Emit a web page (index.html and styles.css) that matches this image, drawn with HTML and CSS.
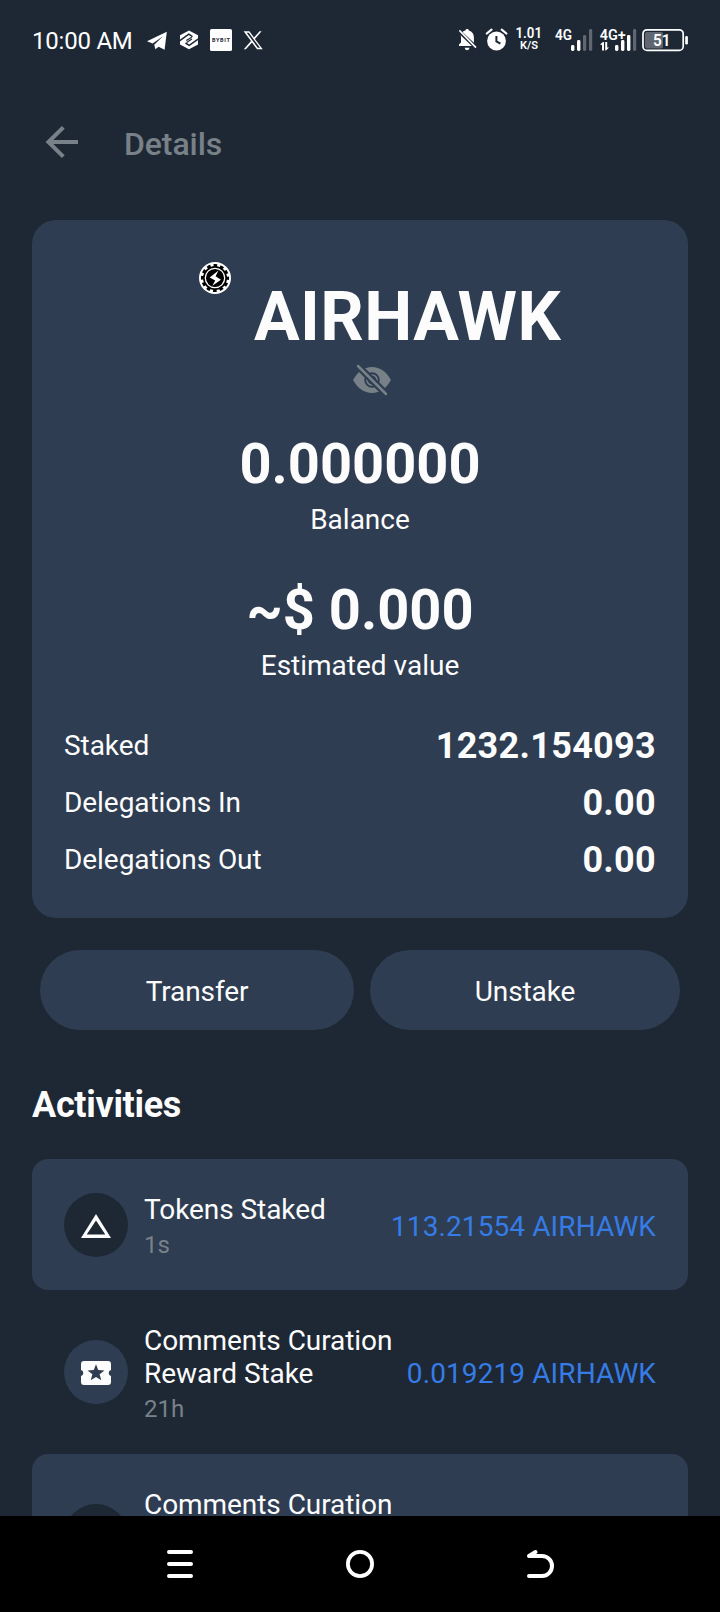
FILE: index.html
```html
<!DOCTYPE html>
<html lang="en">
<head>
<meta charset="utf-8">
<title>Details</title>
<link rel="stylesheet" href="styles.css">
</head>
<body>
<div class="screen">
  <div class="status">
    <span class="clock">10:00 AM</span>
    <svg class="status-apps" width="120" height="24" viewBox="145 28 120 24">
      <path fill="#fff" d="M147 41.2 166.8 31.8 164.6 49.8 158.6 46.8 155.4 49.2 154.2 44.8 163 36.2 152.6 43.6Z"/>
      <path fill="#fff" d="M189 30.400 198 35.200V44.400L189 49.200 180 44.400V35.200Z"/>
      <g fill="none" stroke="#1e2835" stroke-width="1.500">
        <path d="M179.500 40.800 188.800 34.200 192.500 36.600M198.500 38.800 189.200 45.400 185.500 43"/>
        <path d="M186.300 40.600 191.700 37.200M186.600 42.400 192 39" stroke-width="1.200"/>
      </g>
      <rect x="210" y="29" width="22" height="22" rx="1.6" fill="#fff"/>
      <text class="bybit" x="211.9" y="42" textLength="18">BYBIT</text>
      <path fill="#fff" fill-rule="evenodd" d="M243.6 31.2h5.8l4.6 6.4 5.6-6.4h2l-6.7 7.7 7.8 10.4H257l-5-6.9-6.1 6.9h-2.1l7.2-8.2ZM246.7 32.7 257.8 47.8h2.2L248.8 32.7Z"/>
    </svg>
    <svg class="status-system" width="232" height="24" viewBox="457 28 232 24">
      <g fill="#fff">
        <path d="M467.2 29c1 0 1.6.7 1.7 1.6 3.2.8 5 3.4 5 6.8v5.4L462.5 32c.8-.7 1.8-1.2 2.9-1.4.1-.9.8-1.6 1.8-1.6ZM460.6 35.3 471.8 46H459v-1.5l2-2V37ZM464.7 47.8h4.8a2.4 2.4 0 0 1-4.8 0Z"/>
        <path d="M459.4 30.4 476 47.6" stroke="#fff" stroke-width="1.6"/>
        <circle cx="496.5" cy="41" r="9.4"/>
        <path d="m486.8 33.5 4.7-3.8M506.4 33.5l-4.7-3.8" stroke="#fff" stroke-width="2.2" stroke-linecap="round"/>
        <path d="M496.4 36v5.4l4 2.3" fill="none" stroke="#1e2835" stroke-width="2"/>
        <rect x="571" y="45" width="3.4" height="6" rx="1.4"/><rect x="577" y="40" width="3.4" height="11" rx="1.4"/>
        <rect x="615" y="45" width="3.4" height="6" rx="1.4"/><rect x="621" y="40" width="3.4" height="11" rx="1.4"/><rect x="627" y="35" width="3.4" height="16" rx="1.4"/>
        <path d="m600 44.400 3-2.400h1v8.600h-2v-5.600ZM605.200 42h2v5.600h1.800l-3 3h-.8Z"/>
        <rect x="685.200" y="36" width="2.700" height="8.500" rx="1.200"/>
      </g>
      <g fill="#606771"><rect x="583" y="35" width="3.200" height="16" rx="1.400"/><rect x="589" y="29" width="3.200" height="22" rx="1.400"/><rect x="633" y="29" width="3.200" height="22" rx="1.400"/><rect x="645" y="32" width="18" height="16.500" rx="2"/></g>
      <rect x="643" y="29.800" width="40.200" height="20.600" rx="4" fill="none" stroke="#fff" stroke-width="1.700"/>
      <text class="tiny" x="515.500" y="38" font-size="15" textLength="26.500" lengthAdjust="spacingAndGlyphs">1.01</text>
      <text class="tiny" x="520" y="49" font-size="10.500" textLength="18" lengthAdjust="spacingAndGlyphs">K/S</text>
      <text class="tiny" x="555" y="40" font-size="14" textLength="17" lengthAdjust="spacingAndGlyphs">4G</text>
      <text class="tiny" x="599.700" y="40" font-size="14" textLength="26" lengthAdjust="spacingAndGlyphs">4G+</text>
      <text class="tiny" x="653" y="45.600" font-size="16" textLength="17.500" lengthAdjust="spacingAndGlyphs">51</text>
    </svg>
  </div>

  <header class="header">
    <svg width="34" height="34" viewBox="0 0 34 34" fill="none" stroke="#788187" stroke-width="4"><path d="M33 17H4M18.300 2.300 3.400 17 18.300 31.700"/></svg>
    <h1 class="title">Details</h1>
  </header>

  <section class="card">
    <div class="token">
      <svg class="logo" width="32" height="32" viewBox="0 0 32 32">
        <circle cx="16" cy="16" r="16" fill="#fff"/>
        <circle cx="16" cy="16" r="12" fill="#000"/>
        <circle cx="16" cy="16" r="12.600" fill="none" stroke="#000" stroke-width="2.900" stroke-dasharray="3.600 2.997" stroke-dashoffset="1.800"/>
        <circle cx="16" cy="16" r="9.700" fill="none" stroke="#fff" stroke-width="1.300"/>
        <path fill="#fff" d="m19.500 8.500-8.800 7 5.500 3-2.800 5.300 8.500-6-5.300-3.500Z"/>
      </svg>
      <h2 class="name">AIRHAWK</h2>
    </div>
    <svg class="eye" width="38" height="32" viewBox="0 0 38 32">
      <defs><mask id="slash"><path fill="#fff" d="M0 0h38v32H0z"/><path d="M1-2 37 34" stroke="#000" stroke-width="7"/></mask></defs>
      <g mask="url(#slash)">
        <path fill="#788187" d="M0 16C4.500 8 11 3 19 3s14.500 5 19 13c-4.500 8-11 13-19 13S4.500 24 0 16Z"/>
        <circle cx="19" cy="16" r="6.800" fill="none" stroke="#2e3d51" stroke-width="1.900"/>
        <circle cx="19" cy="16" r="3.700" fill="none" stroke="#2e3d51" stroke-width="1.300"/>
      </g>
      <path d="M5 2 33 30" stroke="#788187" stroke-width="2.500" stroke-linecap="round"/>
    </svg>
    <div class="figure">0.000000</div>
    <div class="caption">Balance</div>
    <div class="figure estimate">~$ 0.000</div>
    <div class="caption">Estimated value</div>
    <dl class="stats">
      <div class="stat"><dt>Staked</dt><dd>1232.154093</dd></div>
      <div class="stat"><dt>Delegations In</dt><dd>0.00</dd></div>
      <div class="stat"><dt>Delegations Out</dt><dd>0.00</dd></div>
    </dl>
  </section>

  <div class="actions">
    <button class="pill transfer">Transfer</button>
    <button class="pill unstake">Unstake</button>
  </div>

  <h3 class="section-title">Activities</h3>
  <div class="list">
    <article class="item raised">
      <span class="badge"><svg width="30" height="24" viewBox="0 0 30 24"><path fill="#fcfcfc" fill-rule="evenodd" d="M15 0 30 24H0ZM15 6.600 5.700 20.600h18.600Z"/></svg></span>
      <div class="what"><div class="label">Tokens Staked</div><div class="time">1s</div></div>
      <div class="amount">113.21554 AIRHAWK</div>
    </article>
    <article class="item">
      <span class="badge"><svg width="30" height="24" viewBox="0 0 30 24"><path fill="#fcfcfc" fill-rule="evenodd" d="M3 0h24a3 3 0 0 1 3 3v6a3.100 3.100 0 0 0 0 6v6a3 3 0 0 1-3 3H3a3 3 0 0 1-3-3v-6a3.100 3.100 0 0 0 0-6V3a3 3 0 0 1 3-3ZM15 3.200l-2.200 5.900-6.300.300 4.900 3.900-1.700 6 5.300-3.400 5.300 3.400-1.700-6 4.900-3.900-6.300-.300Z"/></svg></span>
      <div class="what"><div class="label">Comments Curation Reward Stake</div><div class="time">21h</div></div>
      <div class="amount">0.019219 AIRHAWK</div>
    </article>
    <article class="item raised">
      <span class="badge"></span>
      <div class="what"><div class="label">Comments Curation</div></div>
    </article>
  </div>

  <nav class="nav">
    <svg width="28" height="28" viewBox="0 0 28 28" stroke="#fff" stroke-width="4" stroke-linecap="round"><path d="M3 2h22M3 14h22M3 26h22"/></svg>
    <svg width="28" height="28" viewBox="0 0 28 28" fill="none" stroke="#fff" stroke-width="3.800"><circle cx="14" cy="14" r="12.100"/></svg>
    <svg width="28" height="28" viewBox="0 0 28 28" fill="none" stroke="#fff" stroke-width="4" stroke-linecap="round" stroke-linejoin="round"><path d="M3 6h13a10 10 0 0 1 0 20H3M9.500 2 3 6"/></svg>
  </nav>
</div>
</body>
</html>
```
FILE: styles.css
```css
* { box-sizing: border-box; }
body {
  margin: 0;
  background: #1e2835;
  color: #fcfcfc;
  font-family: Roboto, "Liberation Sans", sans-serif;
}
h1, h2, h3, dl, dd { margin: 0; }
svg { display: block; flex: none; overflow: visible; }
.screen {
  display: flex;
  flex-direction: column;
  width: 720px;
  height: 1612px;
  overflow: hidden;
}
.status {
  display: flex;
  align-items: center;
  height: 80px;
  padding: 0 31px 0 32px;
}
.clock { width: 113px; font-size: 24px; line-height: 28px; letter-spacing: -0.22px; color: #fff; padding-top: 2px; }
.status-system { margin-left: auto; }
.bybit { font: 700 5.5px Roboto, sans-serif; fill: #1e2835; }
.tiny { font-family: Roboto, sans-serif; font-weight: 600; fill: #fff; }
.header {
  display: flex;
  align-items: center;
  gap: 45px;
  height: 124px;
  padding-left: 45px;
  color: #788187;
}
.title { margin-top: 4px; font-size: 32px; font-weight: 500; line-height: 38px; letter-spacing: -0.08px; white-space: nowrap; }
.card {
  flex: none;
  height: 698px;
  margin: 16px 32px 0;
  padding: 42px 32px 0;
  border-radius: 24px;
  background: #2e3d51;
}
.token { display: flex; align-items: flex-start; gap: 23px; padding-left: 135px; }
.name { margin-top: 15px; font-size: 68px; font-weight: 700; line-height: 80px; letter-spacing: 0.35px; }
.eye { margin: 7px 0 0 289px; }
.figure {
  margin-top: 35px;
  font-size: 56px;
  font-weight: 700;
  line-height: 66px;
  text-align: center;
}
.caption { margin-top: 6px; font-size: 28px; line-height: 33px; text-align: center; }
.estimate { margin-top: 41px; }
.stats { margin-top: 35px; }
.stat { display: flex; align-items: center; justify-content: space-between; height: 57px; }
.stat dt { font-size: 28px; line-height: 33px; letter-spacing: -0.06px; }
.stat dd { font-size: 36px; font-weight: 700; line-height: 42px; letter-spacing: 0.3px; }
.actions { display: flex; flex: none; gap: 16px; padding: 32px 40px 0; }
.pill {
  height: 80px;
  padding: 2px 0 0;
  border: 0;
  border-radius: 40px;
  background: #2e3d51;
  color: inherit;
  font: 28px/33px Roboto, sans-serif;
  letter-spacing: -0.1px;
}
.transfer { width: 314px; }
.unstake { width: 310px; }
.section-title { margin: 54px 32px 0; font-size: 36px; font-weight: 700; line-height: 42px; letter-spacing: -0.3px; }
.list { flex: 1; min-height: 0; overflow: hidden; padding: 33px 32px 0; }
.item {
  display: flex;
  align-items: center;
  gap: 16px;
  height: 131px;
  padding: 0 32px;
  border-radius: 16px;
}
.item + .item { height: 164px; }
.raised { background: #2e3d51; }
.badge {
  display: flex;
  align-items: center;
  justify-content: center;
  width: 64px;
  height: 64px;
  padding-top: 2px;
  border-radius: 50%;
  background: #2e3d51;
  flex: none;
}
.raised .badge { background: #1e2835; }
.what { align-self: flex-start; width: 252px; padding-top: 34px; }
.label { font-size: 28px; line-height: 33px; letter-spacing: -0.06px; }
.time { margin-top: 5px; color: #788187; font-size: 24px; line-height: 28px; }
.amount { flex: 1; margin-left: -16px; padding-top: 3px; color: #357ce6; font-size: 28px; line-height: 33px; letter-spacing: 0.1px; text-align: right; white-space: nowrap; }
.nav {
  display: flex;
  flex: none;
  align-items: center;
  justify-content: center;
  gap: 152px;
  height: 96px;
  background: #000;
}
```
